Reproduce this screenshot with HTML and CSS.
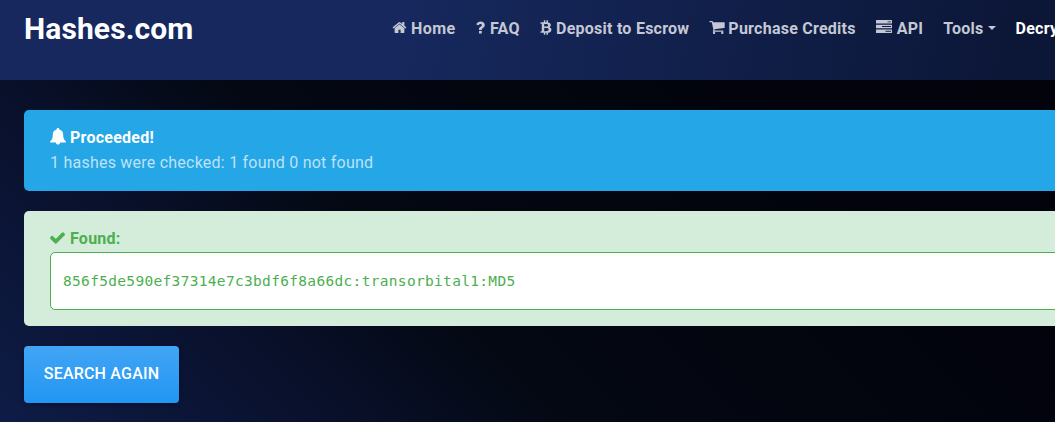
FILE: index.html
```html
<!DOCTYPE html>
<html lang="en">
<head>
<meta charset="utf-8">
<title>Hashes.com</title>
<link rel="stylesheet" href="styles.css">
</head>
<body>
<header class="header">
  <a class="brand">Hashes.com</a>
  <nav class="nav">
    <a class="nav-link first"><svg class="icon home" viewBox="64 128 1664 1536"><path d="M1472 992v480q0 26-19 45t-45 19h-384v-384h-256v384h-384q-26 0-45-19t-19-45v-480q0-1 .5-3t.5-3l575-474 575 474q1 2 1 6zm223-69l-62 74q-8 9-21 11h-3q-13 0-21-7l-692-577-692 577q-12 8-24 7-13-2-21-11l-62-74q-8-10-7-23.5t11-21.5l719-599q32-26 76-26t76 26l244 204v-195q0-14 9-23t23-9h192q14 0 23 9t9 23v408l219 182q10 8 11 21.5t-7 23.5z"/></svg>Home</a>
    <a class="nav-link faq"><svg class="icon question" viewBox="0 0 9 13"><path d="M3 9.900h2.800v2.600H3zM.3 3.200C1.300 1.400 2.700.5 4.600.5 7 .5 8.800 2 8.800 4c0 1.500-.8 2.300-1.900 3C6 7.600 5.800 7.900 5.800 8.900H3V8.300c0-1.500.8-2.200 1.800-2.800.8-.4 1-.7 1-1.300 0-.7-.6-1.100-1.400-1.100-.9 0-1.400.5-2.100 1.500z"/></svg>FAQ</a>
    <a class="nav-link"><svg class="icon bitcoin" viewBox="0 0 12 15"><path fill-rule="evenodd" d="M.5 2.300h3.300V.3h1.500v2h1.200V.3H8v2.200c1.700.3 2.800 1.100 2.800 2.600 0 1-.5 1.700-1.400 2.100 1.300.4 2 1.200 2 2.500 0 2-1.300 2.900-3.400 3.100v2H6.500v-2H5.300v2H3.800v-2H.4l.3-1.500h1.100V3.800H.5zM4.200 3.900v2.600h1.500c1.500 0 2.400-.3 2.400-1.300S7.200 3.900 5.700 3.900zM4.200 8v3.200h1.700c1.700 0 2.700-.4 2.700-1.600S7.600 8 5.900 8z"/></svg>Deposit to Escrow</a>
    <a class="nav-link purchase"><svg class="icon cart" viewBox="64 256 1664 1408"><path d="M704 1536q0 52-38 90t-90 38-90-38-38-90 38-90 90-38 90 38 38 90zm896 0q0 52-38 90t-90 38-90-38-38-90 38-90 90-38 90 38 38 90zm128-1088v512q0 24-16.500 42.500t-40.500 21.500l-1044 122q13 60 13 70 0 16-24 64h920q26 0 45 19t19 45-19 45-45 19h-1024q-26 0-45-19t-19-45q0-11 8-31.500t16-36 21.500-40 15.500-29.500l-177-823h-204q-26 0-45-19t-19-45 19-45 45-19h256q16 0 28.500 6.500t19.500 15.500 13 24.500 8 26 5.500 29.500 4.500 26h1201q26 0 45 19t19 45z"/></svg>Purchase Credits</a>
    <a class="nav-link"><svg class="icon tasks" viewBox="0 0 16 13"><path fill-rule="evenodd" d="M.4 0h15.200q.4 0 .4.4v2.800q0 .4-.4.4H.4Q0 3.600 0 3.200V.4Q0 0 .4 0zM.4 4.700h15.200q.4 0 .4.4v2.800q0 .4-.4.4H.4Q0 8.300 0 7.900V5.100q0-.4.4-.4zM.4 9.400h15.200q.4 0 .4.4v2.800q0 .4-.4.4H.4Q0 13 0 12.600V9.800q0-.4.4-.4zM11.500 1.400v.9H15v-.9zM6 6v1h9V6zM9.500 10.700v1H15v-1z"/></svg>API</a>
    <a class="nav-link">Tools<span class="caret"></span></a>
    <a class="nav-link active">Decry</a>
  </nav>
</header>
<main class="main">
  <section class="alert info">
    <strong class="title"><svg class="icon bell" viewBox="0 0 16 17"><path d="M8 0c.8 0 1.300.5 1.300 1.300v.3c2.500.6 3.900 2.500 3.900 5.100 0 3.300.8 5.400 2.600 6.600.4.300.2 1.100-.4 1.100h-5.300C9.900 15.700 9.100 16.500 8 16.500s-1.900-.8-2.100-2.100H.6c-.6 0-.8-.8-.4-1.100 1.800-1.200 2.600-3.300 2.600-6.600 0-2.600 1.400-4.500 3.900-5.100v-.3C6.700.5 7.200 0 8 0z"/></svg>Proceeded!</strong>
    <p class="summary">1 hashes were checked: 1 found 0 not found</p>
  </section>
  <section class="alert success">
    <strong class="title"><svg class="icon check" viewBox="121 334 1550 1188"><path d="M1671 566q0 40-28 68l-724 724-136 136q-28 28-68 28t-68-28l-136-136-362-362q-28-28-28-68t28-68l136-136q28-28 68-28t68 28l294 295 656-657q28-28 68-28t68 28l136 136q28 28 28 68z"/></svg>Found:</strong>
    <div class="result">856f5de590ef37314e7c3bdf6f8a66dc:transorbital1:MD5</div>
  </section>
  <button class="button">SEARCH AGAIN</button>
</main>
</body>
</html>
```
FILE: styles.css
```css
* { box-sizing: border-box; }
body {
  margin: 0;
  height: 422px;
  overflow: hidden;
  font: 16px/25px Roboto, sans-serif;
  background: linear-gradient(45deg, #0e1c46 0, #0a1230 200px, #040812 410px, #02030c 800px, #02030b 100%);
}
.header {
  display: flex;
  height: 80px;
  width: 1055px;
  padding: 16px 0 0 24px;
  overflow: hidden;
  background: linear-gradient(100deg, #16285d 0, #16285d 38%, #0c1738 95%);
}
.brand {
  width: 368px;
  flex: none;
  font-size: 30px;
  font-weight: 700;
  letter-spacing: .1px;
  color: #fff;
}
.nav { display: flex; gap: 20px; flex: none; }
.nav-link {
  display: flex;
  height: 25px;
  white-space: nowrap;
  font-weight: 700;
  letter-spacing: .25px;
  color: #c4c8d5;
}
.nav-link.first { width: 64px; letter-spacing: .4px; }
.nav-link.faq { width: 44px; letter-spacing: .25px; }
.nav-link.purchase { letter-spacing: .25px; }
.nav-link.active { color: #fff; }
.icon { flex: none; fill: currentColor; }
.home { width: 15px; height: 13px; margin: 5px 4px 0 0; }
.question { width: 9px; height: 13px; margin: 5px 5px 0 0; }
.bitcoin { width: 12px; height: 15px; margin: 4px 4px 0 0; }
.cart { width: 16px; height: 13px; margin: 5px 3px 0 0; }
.tasks { width: 16px; height: 13px; margin: 4px 5px 0 0; }
.caret {
  width: 0;
  height: 0;
  margin: 10px 0 0 4px;
  border: 4px solid transparent;
  border-top-color: currentColor;
  border-bottom: 0;
}
.main { padding: 30px 0 0 24px; }
.alert {
  width: 1060px;
  margin-bottom: 20px;
  padding: 15px 26px;
  border-radius: 5px;
}
.info { height: 81px; background: #25a6e6; color: #fff; }
.success { height: 115px; background: #d4ecda; color: #4caf50; }
.title { display: flex; height: 25px; letter-spacing: .25px; }
.bell { width: 16px; height: 17px; margin: 3px 4px 0 0; }
.check { width: 15px; height: 12px; margin: 6px 5px 0 0; }
.summary { margin: 0; letter-spacing: .23px; color: rgba(255, 255, 255, .7); }
.result {
  height: 58px;
  width: 1020px;
  margin-top: 1px;
  padding: 0 12px;
  border: 1px solid #4caf50;
  border-radius: 5px;
  background: #fff;
  font: 14.5px/56px "DejaVu Sans Mono", monospace;
  letter-spacing: .32px;
}
.button {
  display: block;
  width: 155px;
  height: 57px;
  padding: 0 0 2px;
  border: 0;
  border-radius: 4px;
  background: linear-gradient(#42a5f5, #2196f3);
  box-shadow: 0 1px 4px rgba(0, 0, 0, .4);
  font: 500 16px Roboto, sans-serif;
  letter-spacing: .2px;
  color: #fff;
}
```
